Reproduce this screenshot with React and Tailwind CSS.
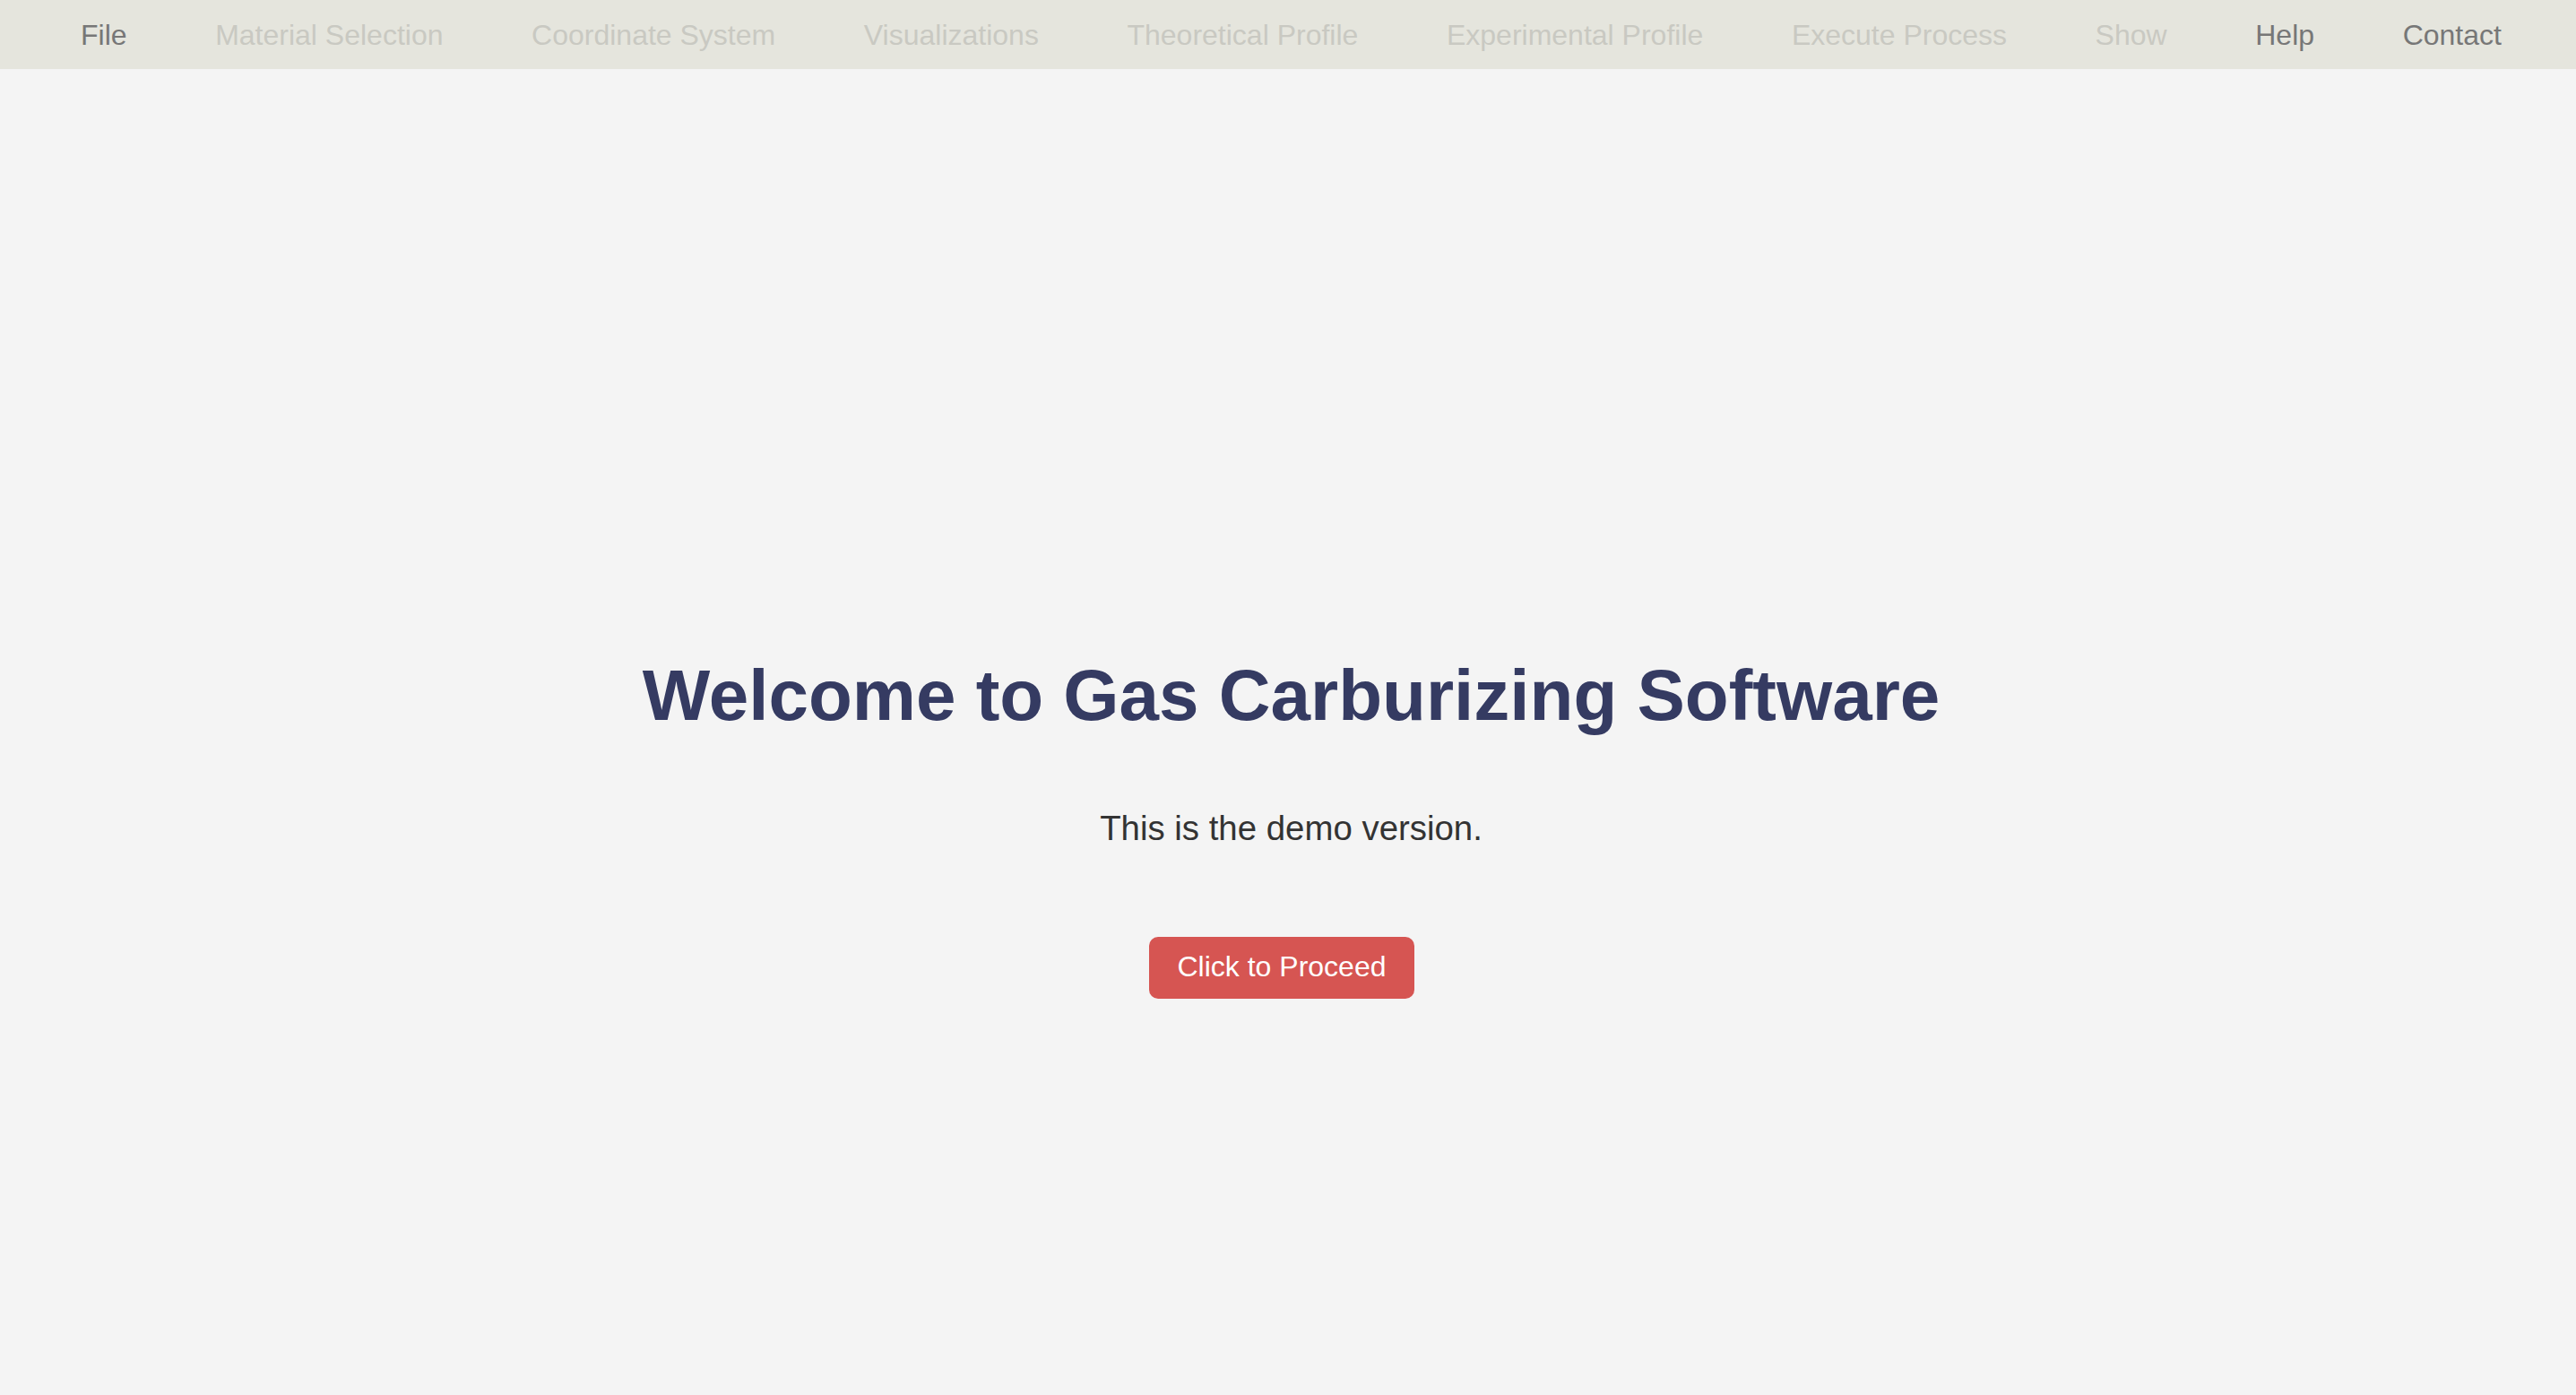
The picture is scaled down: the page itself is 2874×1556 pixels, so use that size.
import React from 'react';

const menuItems = [
  { label: 'File', enabled: true },
  { label: 'Material Selection', enabled: false },
  { label: 'Coordinate System', enabled: false },
  { label: 'Visualizations', enabled: false },
  { label: 'Theoretical Profile', enabled: false },
  { label: 'Experimental Profile', enabled: false },
  { label: 'Execute Process', enabled: false },
  { label: 'Show', enabled: false },
  { label: 'Help', enabled: true },
  { label: 'Contact', enabled: true },
];

const App = () => {
  return (
    <div className="min-h-screen bg-[#f4f4f4] font-['Liberation_Sans',Arial,sans-serif]">
      {/* top menu */}
      <nav className="flex items-center h-[77px] bg-[#e5e5dd] pl-[40.7px] pt-[2px]">
        {menuItems.map((item) => (
          <span
            key={item.label}
            className={
              item.enabled
                ? 'px-[49.3px] text-[32px] leading-[37px] text-[#777777] cursor-pointer'
                : 'px-[49.3px] text-[32px] leading-[37px] text-[#c9c9c2]'
            }
          >
            {item.label}
          </span>
        ))}
      </nav>

      <main className="flex flex-col items-center pt-[651px] pl-[7px]">
        <h1 className="text-[80px] leading-[96px] font-bold text-[#353b62]">
          Welcome to Gas Carburizing Software
        </h1>
        <p className="mt-[77px] text-[38.4px] leading-[46px] text-[#333333]">
          This is the demo version.
        </p>
        <button className="mt-[98px] mr-[21px] px-[32px] pt-[15px] pb-[17px] rounded-[10px] bg-[#d65552] text-white text-[32px] leading-[37px]">
          Click to Proceed
        </button>
      </main>
    </div>
  );
};

export default App;
